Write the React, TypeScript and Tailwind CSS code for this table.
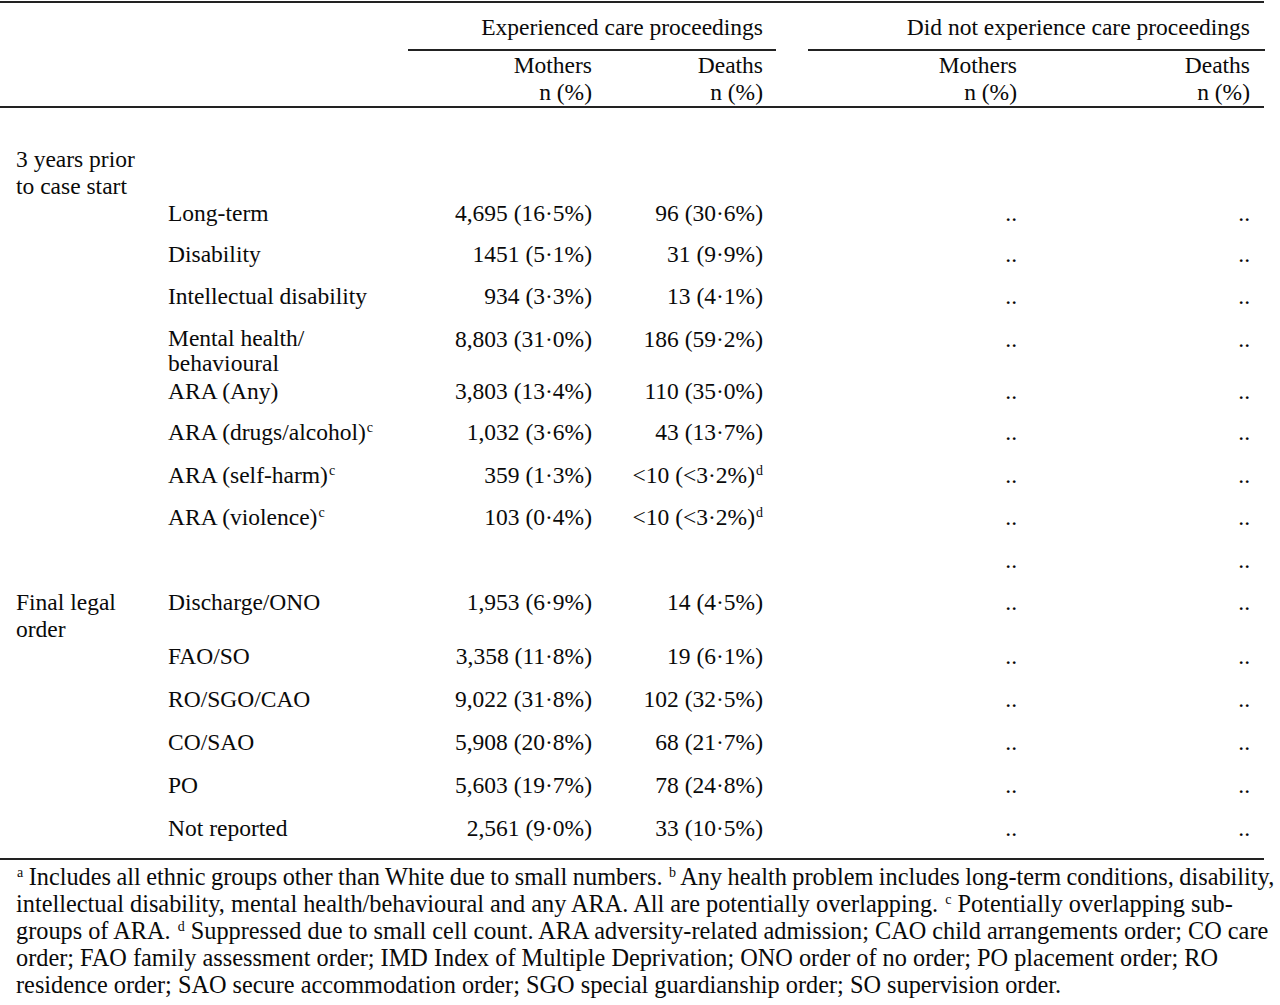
const cols = "grid grid-cols-[160px_248px_197px_171px_32px_224px_233px]";

function Sup({ children }: { children: string }) {
  return <span className="relative -top-[8px] text-[14px] leading-none ml-[1px]">{children}</span>;
}

type RowProps = {
  group?: React.ReactNode;
  label?: React.ReactNode;
  mothers?: React.ReactNode;
  deaths?: React.ReactNode;
  dots?: boolean;
  h: string;
};

function Row({ group, label, mothers, deaths, dots = true, h }: RowProps) {
  return (
    <div className={`${cols} ${h}`}>
      <div className="pl-[16px]">{group}</div>
      <div className="pl-[8px]">{label}</div>
      <div className="text-right pr-[13px]">{mothers}</div>
      <div className="text-right pr-[13px]">{deaths}</div>
      <div />
      <div className="text-right pr-[15px]">{dots ? ".." : ""}</div>
      <div className="text-right pr-[15px]">{dots ? ".." : ""}</div>
    </div>
  );
}

export default function App() {
  return (
    <main className="w-[1280px] overflow-hidden bg-white text-[#0a0a0a] font-['Liberation_Serif','Times_New_Roman',serif] text-[23.5px] leading-[27px]">
      <div className="w-[1264px] pt-[1px]">
        {/* 헤더 */}
        <div className="border-t-2 border-[#222]">
          <div className={cols}>
            <div className="col-start-3 col-span-2 text-right pr-[13px] pt-[11px] pb-[8px] border-b-2 border-[#222]">
              Experienced care proceedings
            </div>
            <div className="col-start-6 col-span-2 text-right pr-[15px] pt-[11px] pb-[8px] border-b-2 border-[#222]">
              Did not experience care proceedings
            </div>
          </div>
          <div className={`${cols} border-b-2 border-[#222]`}>
            <div className="col-start-3 text-right pr-[13px] pt-[1px]">
              Mothers
              <br />n (%)
            </div>
            <div className="text-right pr-[13px] pt-[1px]">
              Deaths
              <br />n (%)
            </div>
            <div className="col-start-6 text-right pr-[15px] pt-[1px]">
              Mothers
              <br />n (%)
            </div>
            <div className="text-right pr-[15px] pt-[1px]">
              Deaths
              <br />n (%)
            </div>
          </div>
        </div>

        {/* 본문 */}
        <div className="pt-[38px] border-b-2 border-[#222]">
          <Row
            h="h-[54px]"
            dots={false}
            group={
              <>
                3 years prior
                <br />
                to case start
              </>
            }
          />
          <Row h="h-[41px]" label="Long-term" mothers="4,695 (16·5%)" deaths="96 (30·6%)" />
          <Row h="h-[42px]" label="Disability" mothers="1451 (5·1%)" deaths="31 (9·9%)" />
          <Row h="h-[43px]" label="Intellectual disability" mothers="934 (3·3%)" deaths="13 (4·1%)" />
          <Row
            h="h-[52px]"
            label={
              <span className="block leading-[25px]">
                Mental health/
                <br />
                behavioural
              </span>
            }
            mothers="8,803 (31·0%)"
            deaths="186 (59·2%)"
          />
          <Row h="h-[41px]" label="ARA (Any)" mothers="3,803 (13·4%)" deaths="110 (35·0%)" />
          <Row
            h="h-[43px]"
            label={
              <>
                ARA (drugs/alcohol)<Sup>c</Sup>
              </>
            }
            mothers="1,032 (3·6%)"
            deaths="43 (13·7%)"
          />
          <Row
            h="h-[42px]"
            label={
              <>
                ARA (self-harm)<Sup>c</Sup>
              </>
            }
            mothers="359 (1·3%)"
            deaths={
              <>
                &lt;10 (&lt;3·2%)<Sup>d</Sup>
              </>
            }
          />
          <Row
            h="h-[43px]"
            label={
              <>
                ARA (violence)<Sup>c</Sup>
              </>
            }
            mothers="103 (0·4%)"
            deaths={
              <>
                &lt;10 (&lt;3·2%)<Sup>d</Sup>
              </>
            }
          />
          <Row h="h-[42px]" />
          <Row
            h="h-[54px]"
            group={
              <>
                Final legal
                <br />
                order
              </>
            }
            label="Discharge/ONO"
            mothers="1,953 (6·9%)"
            deaths="14 (4·5%)"
          />
          <Row h="h-[43px]" label="FAO/SO" mothers="3,358 (11·8%)" deaths="19 (6·1%)" />
          <Row h="h-[43px]" label="RO/SGO/CAO" mothers="9,022 (31·8%)" deaths="102 (32·5%)" />
          <Row h="h-[43px]" label="CO/SAO" mothers="5,908 (20·8%)" deaths="68 (21·7%)" />
          <Row h="h-[43px]" label="PO" mothers="5,603 (19·7%)" deaths="78 (24·8%)" />
          <Row h="h-[43px]" label="Not reported" mothers="2,561 (9·0%)" deaths="33 (10·5%)" />
        </div>
      </div>

      {/* 각주 */}
      <div className="pl-[16px] pt-[3px] whitespace-nowrap text-[24.3px]">
        <div className="[word-spacing:-0.6px]">
          <Sup>a</Sup> Includes all ethnic groups other than White due to small numbers. <Sup>b</Sup> Any health problem includes long-term conditions, disability,
        </div>
        <div>
          intellectual disability, mental health/behavioural and any ARA. All are potentially overlapping. <Sup>c</Sup> Potentially overlapping sub-
        </div>
        <div>
          groups of ARA. <Sup>d</Sup> Suppressed due to small cell count. ARA adversity-related admission; CAO child arrangements order; CO care
        </div>
        <div>
          order; FAO family assessment order; IMD Index of Multiple Deprivation; ONO order of no order; PO placement order; RO
        </div>
        <div>residence order; SAO secure accommodation order; SGO special guardianship order; SO supervision order.</div>
      </div>
    </main>
  );
}
